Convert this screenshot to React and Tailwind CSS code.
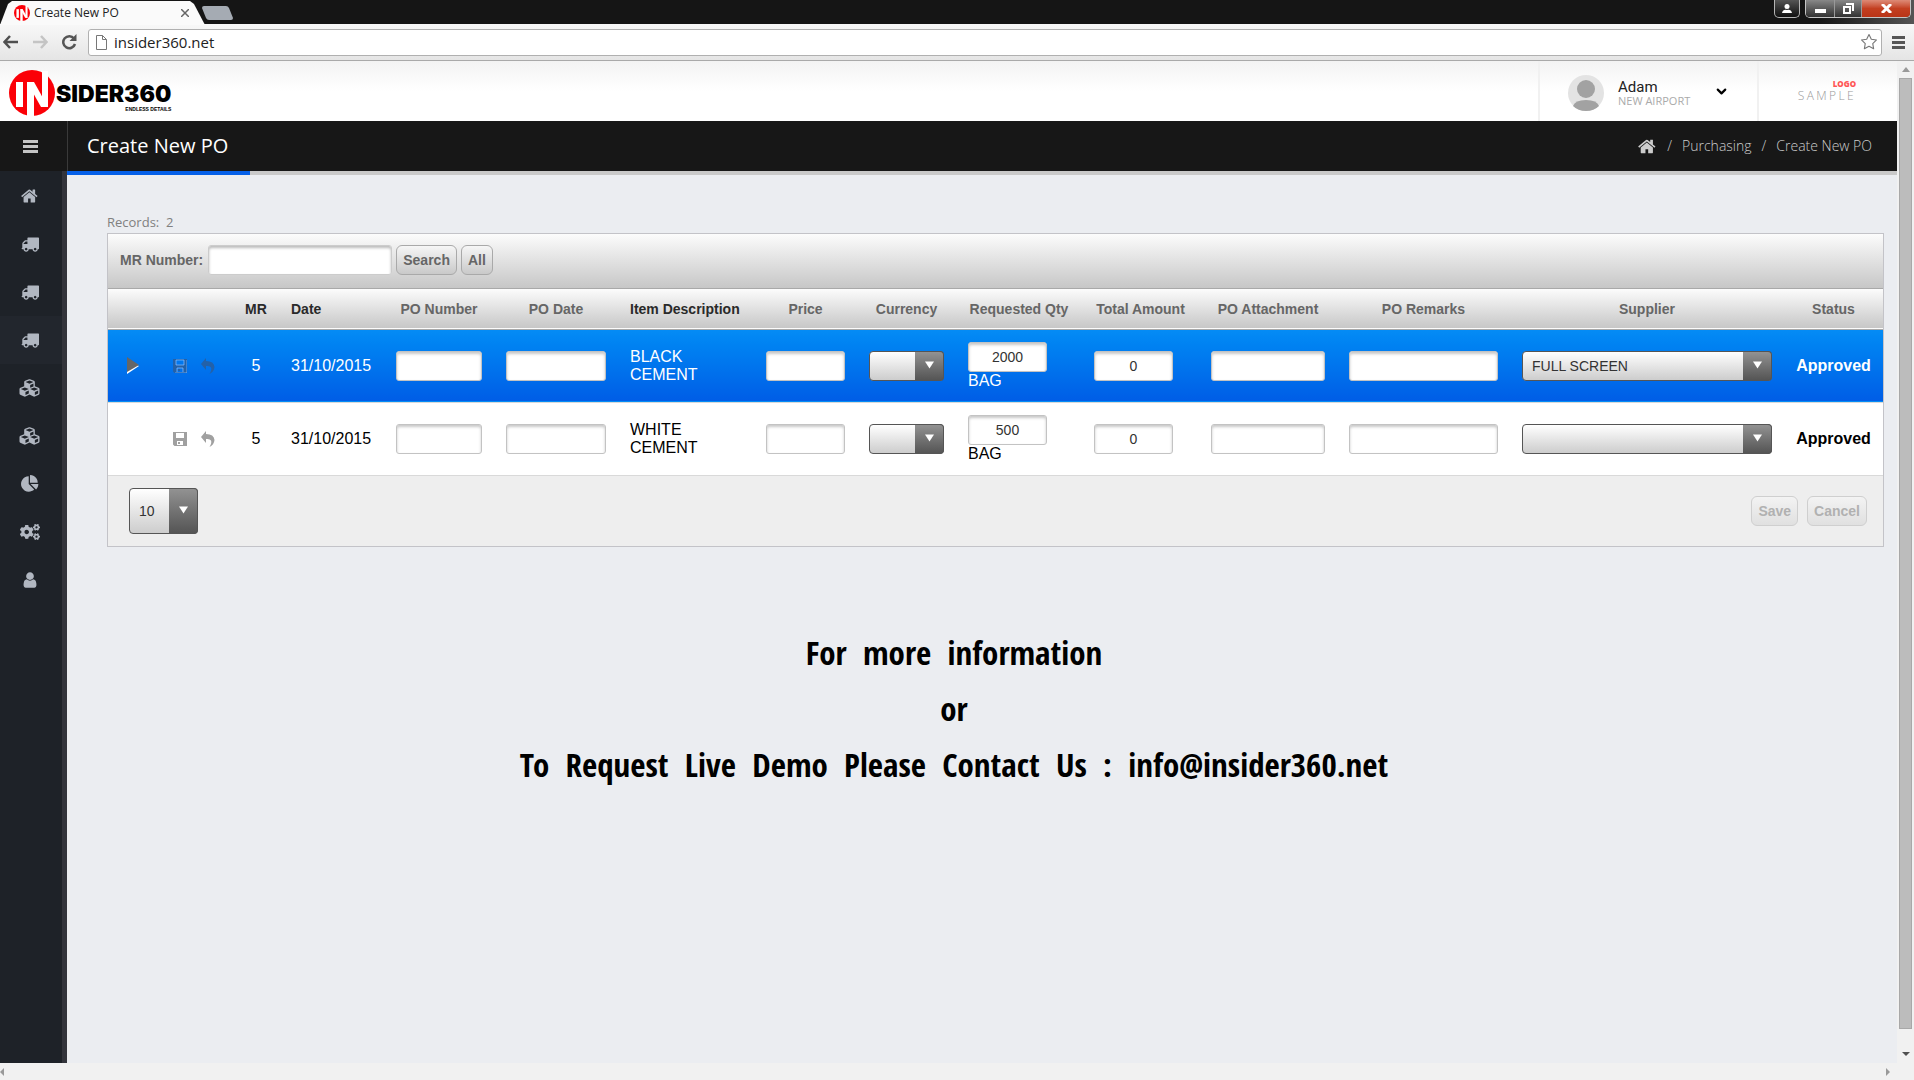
import React from 'react'
import { FaBars, FaCogs, FaCubes } from 'react-icons/fa'
import { FiChevronDown, FiStar } from 'react-icons/fi'

const HOME_PATH = 'M1408 992v480q0 26-19 45t-45 19h-384v-384h-256v384h-384q-26 0-45-19t-19-45v-480q0-1 .5-3t.5-3l575-474 575 474q1 2 1 6zm223-69l-62 74q-8 9-21 11h-3q-13 0-21-7l-692-577-692 577q-12 8-24 7-13-2-21-11l-62-74q-8-10-7-23.5t11-21.5l719-599q32-26 76-26t76 26l244 204v-195q0-14 9-23t23-9h192q14 0 23 9t9 23v408l219 182q10 8 11 21.5t-7 23.5z'
const TRUCK_PATH = 'M640 1408q0-52-38-90t-90-38-90 38-38 90 38 90 90 38 90-38 38-90zm-384-512h384v-256h-158q-13 0-22 9l-195 195q-9 9-9 22v30zm1280 512q0-52-38-90t-90-38-90 38-38 90 38 90 90 38 90-38 38-90zm256-1088v1024q0 15-4 26.5t-13.5 18.5-16.5 11.5-23.5 6-22.5 2-25.5 0-22.5-.5q0 106-75 181t-181 75-181-75-75-181h-384q0 106-75 181t-181 75-181-75-75-181h-64q-3 0-22.5.5t-25.5 0-22.5-2-23.5-6-16.5-11.5-13.5-18.5-4-26.5q0-26 19-45t45-19v-320q0-8-.5-35t0-38 2.5-34.5 6.5-37 14-30.5 22.5-30l198-198q19-19 50.5-32t58.5-13h160v-192q0-26 19-45t45-19h1024q26 0 45 19t19 45z'
const PIE_PATH = 'M768 890l546 546q-106 108-247.5 168t-298.5 60q-209 0-385.5-103t-279.5-279.5-103-385.5 103-385.5 279.5-279.5 385.5-103v762zm187 6h773q0 157-60 298.5t-168 247.5zm709-128h-768v-768q209 0 385.5 103t279.5 279.5 103 385.5z'
const USER_PATH = 'M1536 1399q0 109-62.5 187t-150.5 78h-854q-88 0-150.5-78t-62.5-187q0-85 8.5-160.5t31.5-152 58.5-131 94-89 134.5-34.5q131 128 313 128t313-128q76 0 134.5 34.5t94 89 58.5 131 31.5 152 8.5 160.5zm-256-887q0 159-112.5 271.5t-271.5 112.5-271.5-112.5-112.5-271.5 112.5-271.5 271.5-112.5 271.5 112.5 112.5 271.5z'

const Glyph = ({ d, className }) => (
  <svg viewBox="0 0 1792 1792" className={`fill-current ${className}`} aria-hidden="true">
    <path d={d} />
  </svg>
)

const LogoMark = ({ className }) => (
  <svg viewBox="0 0 46 46" className={className} aria-hidden="true">
    <circle cx="23" cy="23" r="23" fill="#fb0007" />
    <rect x="7" y="12" width="7" height="25" fill="#fff" />
    <rect x="18" y="12" width="7" height="34" fill="#fff" />
    <rect x="33" y="1" width="6" height="36" fill="#fff" />
    <path d="M18 12h7l14 25h-7z" fill="#fff" />
  </svg>
)

const MENU = [
  { label: 'Home', icon: <Glyph d={HOME_PATH} className="w-[18px] h-[18px]" /> },
  { label: 'Requests', icon: <Glyph d={TRUCK_PATH} className="w-[18px] h-[18px]" /> },
  { label: 'Orders', icon: <Glyph d={TRUCK_PATH} className="w-[18px] h-[18px]" /> },
  { label: 'Purchasing', icon: <Glyph d={TRUCK_PATH} className="w-[18px] h-[18px]" />, active: true },
  { label: 'Stock', icon: <FaCubes className="w-[23px] h-5" /> },
  { label: 'Warehouse', icon: <FaCubes className="w-[23px] h-5" /> },
  { label: 'Reports', icon: <Glyph d={PIE_PATH} className="w-[18px] h-[18px]" /> },
  { label: 'Settings', icon: <FaCogs className="w-5 h-5" /> },
  { label: 'Users', icon: <Glyph d={USER_PATH} className="w-[18px] h-[18px]" /> },
]

const COLUMNS = [
  { key: 'marker', width: 'w-[53px]' },
  { key: 'actions', width: 'w-[72px]' },
  { key: 'mr', title: 'MR', width: 'w-[46px]', head: 'text-[#2a2a2a]' },
  { key: 'date', title: 'Date', width: 'w-[105px]', head: 'text-[#2a2a2a] text-left px-3' },
  { key: 'poNumber', title: 'PO Number', width: 'w-[110px]' },
  { key: 'poDate', title: 'PO Date', width: 'w-[124px]' },
  { key: 'item', title: 'Item Description', width: 'w-[136px]', head: 'text-[#2a2a2a] text-left px-3' },
  { key: 'price', title: 'Price', width: 'w-[103px]' },
  { key: 'currency', title: 'Currency', width: 'w-[99px]' },
  { key: 'qty', title: 'Requested Qty', width: 'w-[126px]' },
  { key: 'total', title: 'Total Amount', width: 'w-[117px]' },
  { key: 'attachment', title: 'PO Attachment', width: 'w-[138px]' },
  { key: 'remarks', title: 'PO Remarks', width: 'w-[173px]' },
  { key: 'supplier', title: 'Supplier', width: 'w-[274px]' },
  { key: 'status', title: 'Status', width: 'w-[99px]' },
]

const ROWS = [
  { id: 1, mr: '5', date: '31/10/2015', item: 'BLACK CEMENT', qty: '2000', unit: 'BAG', total: '0', supplier: 'FULL SCREEN', status: 'Approved', selected: true },
  { id: 2, mr: '5', date: '31/10/2015', item: 'WHITE CEMENT', qty: '500', unit: 'BAG', total: '0', supplier: '', status: 'Approved' },
]

const Field = ({ label, value = '', className = 'w-full' }) => (
  <input
    type="text"
    aria-label={label}
    defaultValue={value}
    className={`block h-[30px] px-2 text-sm text-center text-[#333] bg-white border border-[#c3c3c3] rounded-[3px] shadow-[inset_0_2px_3px_#c8c8c8] outline-none ${className}`}
  />
)

const Dropdown = ({ label, options, className = 'w-full h-[30px]' }) => (
  <div className={`relative ${className}`}>
    <select
      aria-label={label}
      className="block w-full h-full pl-[9px] pr-8 text-sm text-[#333] appearance-none border border-[#555] rounded-[4px] bg-linear-to-b from-white to-[#cdcdcd] outline-none"
    >
      {options.map((option) => <option key={option}>{option}</option>)}
    </select>
    <span className="absolute inset-y-0 right-0 w-[29px] flex items-center justify-center pb-px rounded-r-[4px] border border-l-0 border-[#555] bg-linear-to-b from-[#929292] to-[#555] pointer-events-none">
      <svg viewBox="0 0 10 8" className="w-[9px] h-[8px] fill-white"><path d="M0 0h10L5 8z" /></svg>
    </span>
  </div>
)

const GridButton = ({ children, disabled }) => (
  <button
    disabled={disabled}
    className={`h-[30px] px-[6px] text-sm font-bold border rounded-[6px] bg-linear-to-b ${
      disabled
        ? 'text-[#b1b1b1] border-[#cfcfcf] from-[#f3f3f3] to-[#e0e0e0]'
        : 'text-[#666] border-[#a9a9a9] from-[#f6f6f6] to-[#c9c9c9]'
    }`}
  >
    {children}
  </button>
)

const RowActions = ({ selected }) => (
  <div className={`flex items-center gap-[14px] pl-3 ${selected ? 'text-[#2361a8]' : 'text-[#a0a0a0]'}`}>
    <button aria-label="Save row">
      <svg viewBox="0 0 14 14" className="block w-[14px] h-[14px]" fill="currentColor">
        <path fillRule="evenodd" d="M0 0h14v14H1.500L0 12.500zM3 1v5h8V1zM4 9v4h6V9zM5 10h2v2H5z" />
        {selected && <path d="M14 1v13H2M3 1v5h8V1zM4 13V9h6v4" fill="none" stroke="#8fc0ff" strokeWidth="1" opacity="0.7" />}
      </svg>
    </button>
    <button aria-label="Undo row">
      <svg viewBox="0 0 14 16" className="block w-[14px] h-4" fill="currentColor">
        <path d="M0 6L5 0v3q8 0 8.500 6Q13 14 8.500 16 11 12 10 9.500 9 7.500 5 8v4z" />
      </svg>
    </button>
  </div>
)

const GridRow = ({ row }) => {
  const { selected } = row
  return (
    <tr className={`h-[73px] border-b border-[#d9d9d9] text-base leading-[18px] ${
      selected ? 'text-white bg-linear-to-b from-[#058cf5] to-[#015de6]' : 'text-black bg-white'
    }`}>
      <td className="pl-[19px]">
        {selected && (
          <svg viewBox="0 0 12 17" className="block w-3 h-[17px]">
            <path d="M0 3l12 6L0 17z" fill="#fff" />
            <path d="M0 0l12 8L0 15z" fill="#666" />
          </svg>
        )}
      </td>
      <td><RowActions selected={selected} /></td>
      <td className="text-center">{row.mr}</td>
      <td className="px-3">{row.date}</td>
      <td className="px-3"><Field label="PO Number" /></td>
      <td className="px-3"><Field label="PO Date" /></td>
      <td className="pl-3 pr-8">{row.item}</td>
      <td className="px-3"><Field label="Price" /></td>
      <td className="px-3"><Dropdown label="Currency" options={['']} /></td>
      <td className="px-3">
        <Field label="Requested Qty" value={row.qty} className="w-[79px]" />
        {row.unit}
      </td>
      <td className="px-3"><Field label="Total Amount" value={row.total} className="w-[79px]" /></td>
      <td className="px-3"><Field label="PO Attachment" /></td>
      <td className="px-3"><Field label="PO Remarks" /></td>
      <td className="px-3"><Dropdown label="Supplier" options={[row.supplier]} /></td>
      <td className="text-center font-bold">{row.status}</td>
    </tr>
  )
}

const BrowserChrome = () => (
  <div className="font-['Open_Sans',sans-serif]">
    <div className="flex items-start justify-between h-6 bg-linear-to-r from-[#151515] from-95% to-[#555]">
      <div className="flex">
        <div className="flex items-center w-[205px] h-6 pl-[14px] pr-4 mt-px bg-[#fafafa] [clip-path:polygon(0_100%,8px_3px,12px_0,190px_0,194px_3px,100%_100%)]">
          <LogoMark className="w-4 h-4" />
          <span className="flex-1 ml-1 text-xs text-[#222]">Create New PO</span>
          <button aria-label="Close tab">
            <svg viewBox="0 0 8 8" className="block w-2 h-2" stroke="#666" strokeWidth="1.500"><path d="M0 0l8 8M8 0L0 8" /></svg>
          </button>
        </div>
        <button aria-label="New tab" className="h-[14px] mt-[6px] -ml-1">
          <svg viewBox="0 0 32 14" className="block w-8 h-[14px]"><path d="M3 0h22q2 0 3 2l4 10q0 2-2 2H8q-2 0-3-2L1 2q0-2 2-2z" fill="#a5abb3" /></svg>
        </button>
      </div>
      <div className="flex gap-[5px] pr-[3px]">
        <button aria-label="Profile" className="flex items-center justify-center w-[26px] h-[18px] border border-t-0 border-[#b5b5b5] rounded-b-[5px] bg-linear-to-b from-[#555] to-[#111]">
          <svg viewBox="0 0 10 9" className="w-[10px] h-[9px] fill-white"><circle cx="5" cy="2.500" r="2.500" /><path d="M0 9q1-4 5-3 4-1 5 3z" /></svg>
        </button>
        <div className="flex h-[18px] border border-t-0 border-[#c5c5c5] rounded-b-[5px] overflow-hidden">
          <button aria-label="Minimize" className="flex items-center justify-center w-7 bg-linear-to-b from-[#888] to-[#333]">
            <svg viewBox="0 0 11 4" className="w-[11px] h-1 mt-1 fill-white"><path d="M0 0h11v4H0z" /></svg>
          </button>
          <button aria-label="Restore" className="flex items-center justify-center w-7 border-x border-[#999] bg-linear-to-b from-[#888] to-[#333]">
            <svg viewBox="0 0 11 11" className="w-[11px] h-[11px]" fill="none" stroke="#fff" strokeWidth="2"><path d="M1 4h6v6H1zM3 1h7v7" /></svg>
          </button>
          <button aria-label="Close" className="flex items-center justify-center w-12 bg-linear-to-b from-[#dd8a76] via-[#c33f20] to-[#b93417]">
            <svg viewBox="0 0 11 9" className="w-[11px] h-[9px]" stroke="#fff" strokeWidth="3"><path d="M1 0l9 9M10 0L1 9" /></svg>
          </button>
        </div>
      </div>
    </div>
    <div className="flex items-center h-[37px] pl-[3px] pr-[9px] border-b border-[#a9a9a9] bg-linear-to-b from-[#f8f8f8] to-[#e5e5e5]">
      <div className="flex items-center gap-[13px] mr-[11px]">
        <button aria-label="Back">
          <svg viewBox="0 0 16 14" className="block w-4 h-[14px]" fill="none" stroke="#4f4f4f" strokeWidth="2.500"><path d="M15 7H2M7 1L1.500 7 7 13" /></svg>
        </button>
        <button aria-label="Forward">
          <svg viewBox="0 0 16 14" className="block w-4 h-[14px]" fill="none" stroke="#c4c4c4" strokeWidth="2.500"><path d="M1 7h13M9 1l5.500 6L9 13" /></svg>
        </button>
        <button aria-label="Reload">
          <svg viewBox="0 0 16 16" className="block w-4 h-4"><path d="M13 4.500A6 6 0 1 0 14 10" fill="none" stroke="#555" strokeWidth="2.500" /><path d="M15.500 0v7h-7z" fill="#555" /></svg>
        </button>
      </div>
      <div className="flex items-center flex-1 h-[27px] px-[7px] gap-[7px] bg-white border border-[#b0b0b0] rounded-[3px]">
        <svg viewBox="0 0 11 15" className="w-[11px] h-[15px]" fill="#fff" stroke="#777"><path d="M.5.5h6l4 4v10H.5zM6.500.5v4h4" /></svg>
        <input aria-label="Address" defaultValue="insider360.net" className="flex-1 pt-px text-[15px] text-[#222] outline-none" />
        <FiStar className="w-[18px] h-[18px] -mr-1 text-[#777]" strokeWidth={1.5} />
      </div>
      <button aria-label="Menu" className="ml-[10px]">
        <svg viewBox="0 0 13 13" className="block w-[13px] h-[13px] fill-[#555]"><path d="M0 0h13v3H0zM0 5h13v3H0zM0 10h13v3H0z" /></svg>
      </button>
    </div>
  </div>
)

const Header = () => (
  <header className="flex items-stretch justify-between h-[60px] pl-[9px] bg-linear-to-b from-[#f3f3f3] to-white to-50%">
    <div className="flex items-center">
      <LogoMark className="w-[46px] h-[46px] mt-1" />
      <div className="flex flex-col items-end pt-3 ml-px text-black">
        <span className="font-['Inter',sans-serif] font-black text-[23px] leading-6">SIDER360</span>
        <span className="font-['Liberation_Sans',sans-serif] font-bold text-[5px] leading-[6px]">ENDLESS DETAILS</span>
      </div>
    </div>
    <div className="flex">
      <button className="flex items-center w-[219px] px-7 pt-1 border-l-2 border-[#f1f1f1] text-left">
        <svg viewBox="0 0 36 36" className="w-9 h-9">
          <circle cx="18" cy="18" r="18" fill="#e3e3e3" />
          <circle cx="18" cy="14" r="9" fill="#a2a2a2" />
          <path d="M5 31q2-6 13-6t13 6q-5 5-13 5T5 31z" fill="#a2a2a2" />
        </svg>
        <span className="flex flex-col flex-1 ml-[14px]">
          <span className="font-['Roboto',sans-serif] text-[15px] leading-4 text-[#222]">Adam</span>
          <span className="font-['Open_Sans',sans-serif] text-[11px] leading-3 text-[#aaa]">NEW AIRPORT</span>
        </span>
        <FiChevronDown className="w-[15px] h-[15px] -mt-1 text-black" strokeWidth={3.5} />
      </button>
      <div className="flex flex-col justify-center items-end w-[140px] pr-[41px] border-l-2 border-[#f1f1f1] font-['Open_Sans',sans-serif]">
        <span className="text-[8px] leading-[10px] font-extrabold text-[#f55]">LOGO</span>
        <span className="text-xs leading-[14px] font-light tracking-[0.2em] text-[#999]">SAMPLE</span>
      </div>
    </div>
  </header>
)

const Navbar = () => (
  <div className="flex items-center h-[50px] bg-[#171717] font-['Open_Sans',sans-serif]">
    <button aria-label="Toggle menu" className="flex items-center justify-center w-[68px] h-full pr-[7px] border-r border-[#3a3a3a] text-[#c4c4c4]">
      <svg viewBox="0 0 15 13" className="w-[15px] h-[13px] fill-current"><path d="M0 0h15v3H0zM0 5h15v3H0zM0 10h15v3H0z" /></svg>
    </button>
    <h1 className="flex-1 ml-[19px] text-xl text-white">Create New PO</h1>
    <nav className="flex items-center gap-[10px] pr-[25px] text-sm font-light text-[#ccc]">
      <a href="#home" aria-label="Home"><Glyph d={HOME_PATH} className="w-[19px] h-[19px]" /></a>
      <span>/</span>
      <a href="#purchasing">Purchasing</a>
      <span>/</span>
      <a href="#create">Create New PO</a>
    </nav>
  </div>
)

const Sidebar = () => (
  <nav className="w-[67px] pt-px bg-[#1e2228] border-r-[5px] border-[#33343b]">
    {MENU.map(({ label, icon, active }, index) => (
      <a
        key={index}
        href="#menu"
        aria-label={label}
        className={`flex items-center justify-center h-12 pr-[3px] text-[#b1b7c1] ${active ? 'bg-[#22262d]' : ''}`}
      >
        {icon}
      </a>
    ))}
  </nav>
)

const Grid = () => (
  <section className="border border-[#c3c3c8] font-['Liberation_Sans',sans-serif]">
    <form className="flex items-center gap-1 h-[55px] pl-3 pb-[2px] border-b border-[#a9a9a9] bg-linear-to-b from-[#fcfcfc] to-[#c7c7c7]">
      <label htmlFor="mr-number" className="mr-px text-sm font-bold text-[#666]">MR Number:</label>
      <input id="mr-number" type="text" className="w-[184px] h-[30px] px-2 text-sm bg-white border border-[#ccc] rounded-[3px] shadow-[inset_0_2px_3px_#bbb] outline-none" />
      <GridButton>Search</GridButton>
      <GridButton>All</GridButton>
    </form>
    <table className="w-full table-fixed border-collapse">
      <thead>
        <tr className="h-10 border-b border-[#a9a9a9] bg-linear-to-b from-[#fcfcfc] to-[#c7c7c7]">
          {COLUMNS.map(({ key, title, width, head = 'text-[#666]' }) => (
            <th key={key} className={`text-sm font-bold whitespace-nowrap ${width} ${head}`}>{title}</th>
          ))}
        </tr>
      </thead>
      <tbody>
        {ROWS.map((row) => <GridRow key={row.id} row={row} />)}
      </tbody>
    </table>
    <div className="flex items-center justify-between h-[70px] pl-[21px] pr-4 bg-[#eee]">
      <Dropdown label="Page size" options={['10']} className="w-[69px] h-[46px]" />
      <div className="flex gap-[9px]">
        <GridButton disabled>Save</GridButton>
        <GridButton disabled>Cancel</GridButton>
      </div>
    </div>
  </section>
)

const ScrollArrow = ({ d, fill = '#999' }) => (
  <svg viewBox="0 0 8 8" className="w-2 h-2" fill={fill} aria-hidden="true"><path d={d} /></svg>
)

const App = () => (
  <div className="flex flex-col min-h-screen bg-[#ebedf1]">
    <BrowserChrome />
    <div className="flex flex-1">
      <div className="flex flex-col flex-1 min-w-0">
        <Header />
        <Navbar />
        <div className="flex flex-1">
          <Sidebar />
          <main className="flex-1 min-w-0">
            <div className="h-1 bg-[#c9c9c9]">
              <div className="w-[183px] h-full bg-[#0560e8]" />
            </div>
            <div className="pl-10 pr-[13px] pt-[37px]">
              <p className="mb-px text-[13px] leading-5 text-[#808080] whitespace-pre font-['Open_Sans',sans-serif]">Records:  2</p>
              <Grid />
            </div>
            <div className="mt-[78px] pr-14 text-center text-[33px] leading-[56px] font-bold text-black whitespace-pre font-['Open_Sans_Condensed','Liberation_Sans_Narrow','Roboto_Condensed',sans-serif]">
              <p>For  more  information</p>
              <p>or</p>
              <p>To  Request  Live  Demo  Please  Contact  Us  :  info@insider360.net</p>
            </div>
          </main>
        </div>
      </div>
      <div className="flex flex-col items-center w-[17px] py-[5px] bg-[#f1f1f1]">
        <ScrollArrow d="M4 1l4 5H0z" />
        <div className="flex-1 w-[13px] mt-1 mb-[21px] bg-[#bcbcbc] border border-[#a8a8a8]" />
        <ScrollArrow d="M0 2h8L4 6z" fill="#505050" />
      </div>
    </div>
    <div className="flex items-center justify-between h-[17px] pr-[22px] bg-[#f1f1f1]">
      <ScrollArrow d="M4 0v8L0 4z" />
      <ScrollArrow d="M2 0v8l4-4z" />
    </div>
  </div>
)

export default App
